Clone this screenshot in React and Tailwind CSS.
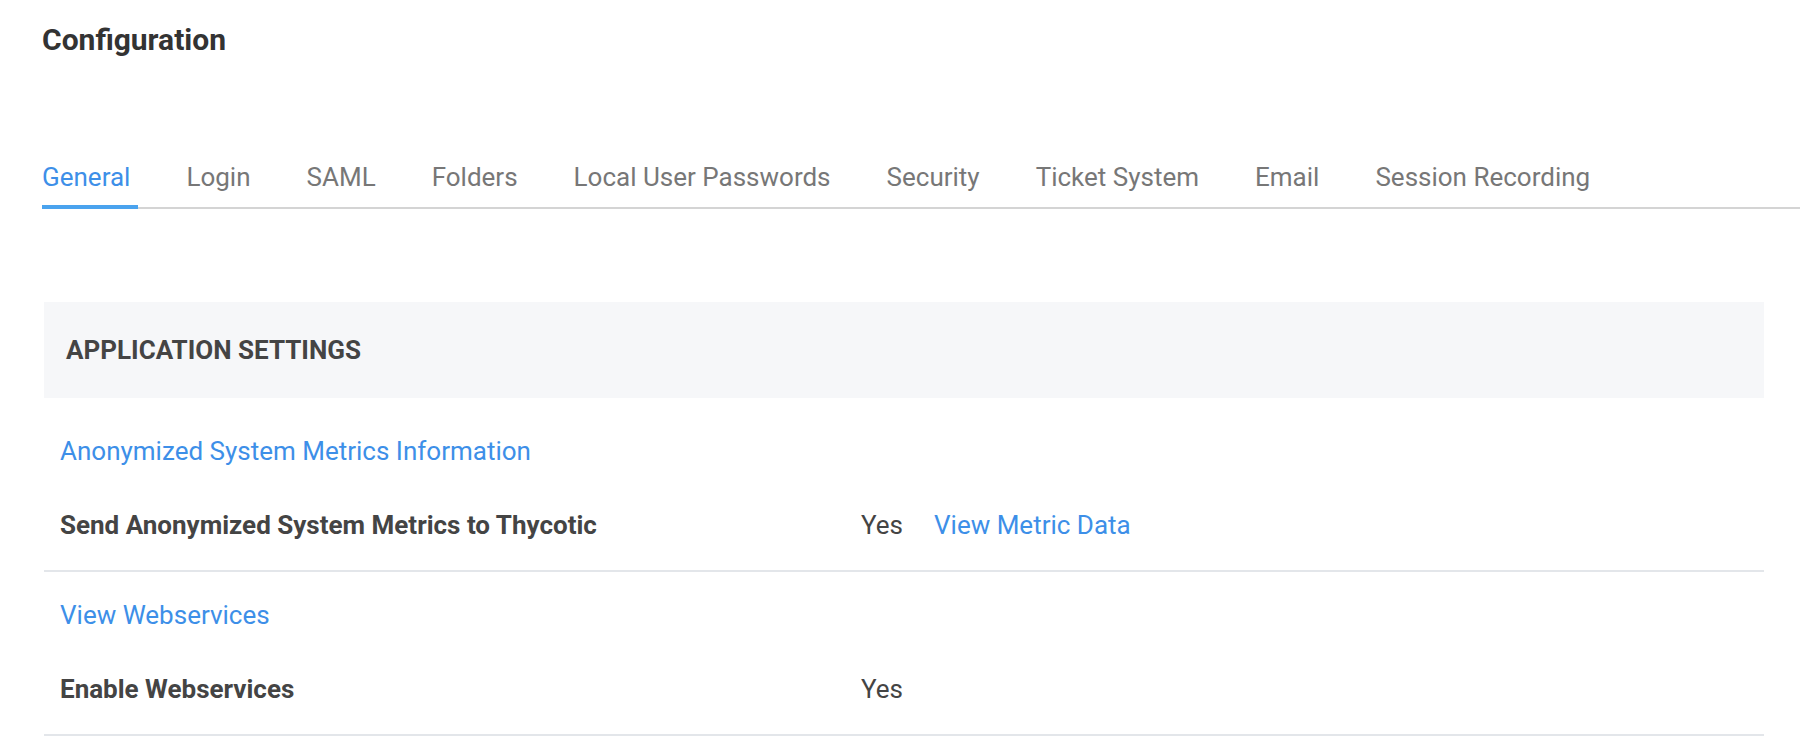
const TABS = ['General', 'Login', 'SAML', 'Folders', 'Local User Passwords', 'Security', 'Ticket System', 'Email', 'Session Recording'];

function SettingGroup({ link, label, value, extra }) {
  return (
    <div className="pt-[30px] pb-[32px] pl-4 border-b-2 border-[#e3e6ea]">
      <a className="block text-[26px] leading-none text-[#3d8fe8]">{link}</a>
      <div className="mt-[48px] flex items-center text-[26px] leading-none">
        <div className="w-[801px] font-bold text-[#444]">{label}</div>
        <div className="text-[#444]">{value}</div>
        {extra && <a className="ml-[31px] text-[#3d8fe8]">{extra}</a>}
      </div>
    </div>
  );
}

export default function App() {
  return (
    <div className="min-h-screen bg-white pl-[42px] pt-[25px]" style={{ fontFamily: 'Roboto, "Liberation Sans", sans-serif' }}>
      <h1 className="text-[30px] font-bold leading-none text-[#333]">Configuration</h1>

      <div className="mt-[109px] flex gap-12 border-b-2 border-[#d4d4d4]">
        {TABS.map((t, i) => (
          <button
            key={t}
            className={`pr-2 pb-[15px] border-b-4 -mb-[2px] text-[26px] leading-none ${
              i === 0 ? 'border-[#4aa3ee] text-[#3d8fe8]' : 'border-transparent text-[#777]'
            }`}>
            {t}
          </button>
        ))}
      </div>

      <div className="ml-[2px] w-[1720px] mt-[93px]">
        <div className="h-[96px] flex items-center pl-[22px] bg-[#f6f7f9] mb-[10px]">
          <h2 className="text-[26px] font-bold leading-none text-[#444] uppercase">Application Settings</h2>
        </div>
        <SettingGroup
          link="Anonymized System Metrics Information"
          label="Send Anonymized System Metrics to Thycotic"
          value="Yes"
          extra="View Metric Data"
        />
        <SettingGroup link="View Webservices" label="Enable Webservices" value="Yes" />
      </div>
    </div>
  );
}
